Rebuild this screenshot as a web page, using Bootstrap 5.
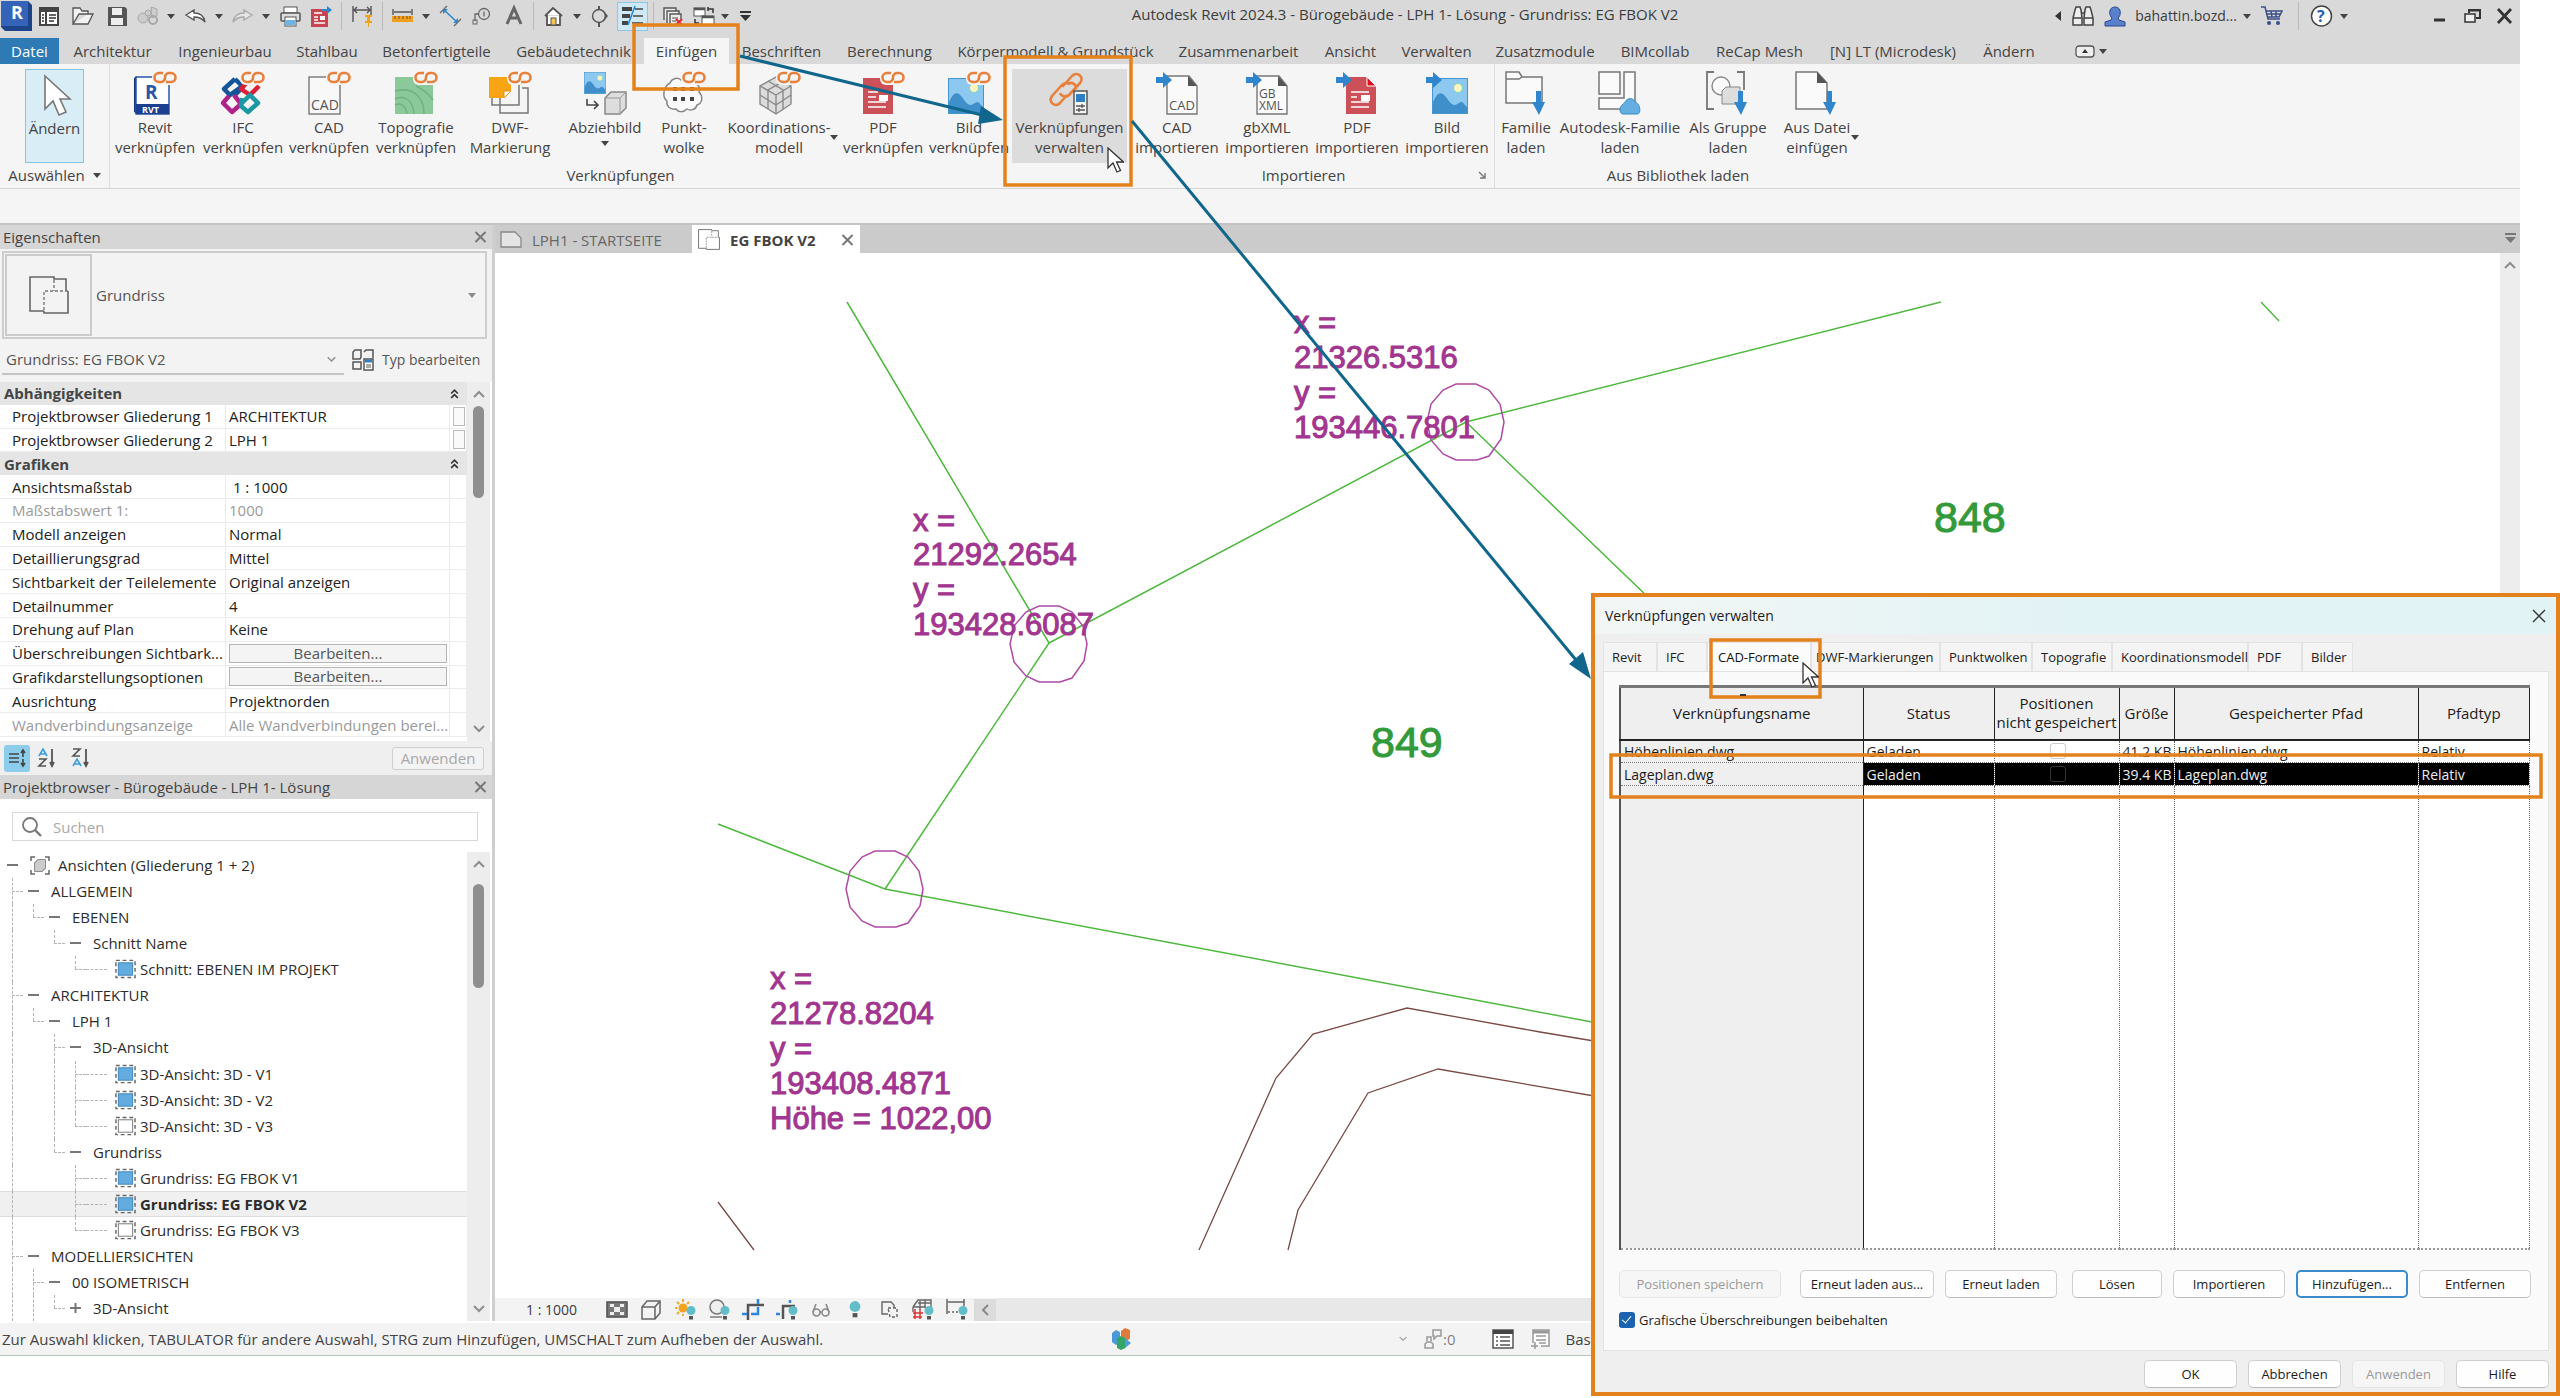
<!DOCTYPE html>
<html lang="de">
<head>
<meta charset="utf-8">
<meta name="viewport" content="width=device-width, initial-scale=1">
<title>Autodesk Revit 2024.3 - Bürogebäude</title>
<link href="https://cdn.jsdelivr.net/npm/bootstrap@5.3.0/dist/css/bootstrap.min.css" rel="stylesheet">
<style>
body{font-family:"Open Sans","Noto Sans",sans-serif;font-size:15px;line-height:20px;color:#3c3c3c;background:#fff;min-height:100vh}
button,input,select{font:inherit;color:inherit}
svg{display:block;overflow:visible}
.plain{border:0;background:none;padding:0;display:flex;align-items:center;justify-content:center;min-width:0}
.app{margin-right:40px}
.title-row{height:38px;background:#d9d9d9}
.qat{display:grid;height:32px;grid-template-columns:33px 31px 38px 30px 32px 14px 34px 14px 33px 14px 34px 29px 11px 30px 10px 31px 16px 32px 31px 33px 6px 34px 14px 31px 35px 7px 32px 30px 12px 29px}
.qat-r{display:grid;height:32px;font-size:14px;grid-template-columns:16px 33px 31px 112px 10px 40px 12px 34px 12px 74px 31px 34px 31px}
.vsep{width:1px;height:28px;background:#bababa;justify-self:center;align-self:center}
.on{background:#cfe8f5;border:1px solid #8cc7e6;width:31px;height:29px;align-self:center;justify-self:center}
.caret-d{width:0;height:0;border:4px solid transparent;border-top:5px solid #444;border-bottom:0}
.rtabs{display:grid;height:26px;background:#d9d9d9;grid-template-columns:59px 107px 118px 86px 133px 141px 85px 105px 111px 221px 145px 79px 93px 124px 96px 113px 154px 78px 86px}
.rtabs .nav-link{padding:0;color:#444;white-space:nowrap;display:flex;align-items:center;justify-content:center;border-radius:0}
.rtabs .nav-link.file{background:#2d7ab4;color:#fff}
.rtabs .nav-link.active{background:#f5f5f5}
.ribbon{height:125px;background:#f5f5f5;border-bottom:1px solid #d4d4d4}
.rgroup{display:flex;flex-direction:column}
.rgrid{display:grid;height:99px;padding-top:5px}
.rgrid>button{flex-direction:column;justify-content:flex-start;height:94px;white-space:nowrap;color:#444;padding-top:2px}
.rgrid svg{width:44px;height:44px;flex:none;margin-bottom:2px}
.rlabel{text-align:center;height:24px;line-height:24px;color:#444}
.g1{width:110px;border-right:1px solid #dedede}
.g2 .rgrid{grid-template-columns:90px 86px 86px 88px 100px 90px 68px 122px 86px 86px 115px}
.g2 .rlabel{padding-left:4px}
.g3{width:368px;border-right:1px solid #dedede}
.g3 .rgrid{grid-template-columns:100px 80px 100px 80px}
.g3 .rlabel{padding-right:14px}
.g4 .rgrid{grid-template-columns:62px 126px 90px 88px}
.sel-mod{width:59px;background:#d9edf6!important;border:1px solid #84c5e5!important;margin-left:25px}
.hov{background:#dcdcdc!important}
.side-caret{position:relative}
.side-caret i{position:absolute;right:2px;top:66px}
.optbar{height:36px;background:#f5f5f5;border-bottom:2px solid #c3c3c3}
.leftp{width:495px;flex:none;background:#f3f3f3;border-right:3px solid #cfcfcf}
.ptitle{height:24px;line-height:22px;background:#d6d6d6;padding:0 5px 0 3px;color:#444}
.typebox{margin:2px 5px 0 2px;height:88px;border:2px solid #cdcdcd;padding:1px;color:#555}
.typebox .thumb{width:87px;height:82px;border:2px solid #cbcbcb}
.typebox .caret-d{border-top-color:#8a8a8a}
.typerow{height:43px;color:#555;padding-bottom:2px}
.typerow select{width:342px;height:31px;border:0;border-bottom:2px solid #c4c4c4;background:transparent;appearance:none;padding:0 4px;margin-left:2px}
.typerow .plain{font-size:14px}
.chev{margin-left:-17px;pointer-events:none}
.pgrid{height:359px;background:#fff;overflow:hidden}
.prows{height:355px}
.prow{flex:1 1 0;min-height:0;display:grid;grid-template-columns:226px 224px 17px;border-bottom:1px solid #ebebeb;color:#222;align-items:stretch}
.prow>*{border-right:1px solid #ebebeb;display:flex;align-items:center;white-space:nowrap;overflow:hidden;padding-left:3px}
.prow>:first-child{padding-left:12px}
.prow.dim{color:#9a9a9a}
.phead{flex:1 1 0;min-height:0;background:#e5e5e5;font-weight:700;color:#444;padding:0 8px 0 4px;display:flex;align-items:center;justify-content:space-between}
.prow .edit{border:1px solid #b4b4b4;background:#f4f4f4;flex:1;padding:0;height:19px;line-height:17px;margin-right:2px;color:#555}
.prow .tiny{border:1px solid #bbb;background:#fafafa;width:12px;height:19px;padding:0}
.sbar{width:23px;background:#ededed;flex:none;display:flex;flex-direction:column;align-items:center;margin-right:2px}
.thumb-v{width:11px;border-radius:6px;background:#8f8f8f}
.pfoot{height:34px;background:#efefef}
.pfoot .ib{width:26px;height:27px;border-radius:3px;margin-left:4px}
.pfoot .picked{background:#8dcdec}
.apply{width:92px;height:23px;border:1px solid #cfcfcf;border-radius:3px;background:#f3f3f3;color:#a8a8a8;padding:0;line-height:20px}
.searchb{margin:13px 14px 11px 12px;height:29px;border:1px solid #d9d9d9;background:#fff}
.searchb input{border:0;outline:0;background:transparent;flex:1}
.searchb input::placeholder{color:#aaa;opacity:1}
.tree{height:469px}
.trow{flex:1 1 0;min-height:0;display:flex;align-items:center;padding-left:2px;white-space:nowrap;color:#2c2c2c;border:1px solid transparent;border-width:1px 0}
.trow.cur{background:#f0f0f0;border-color:#dedede;font-weight:700}
.gd{width:21px;flex:none;align-self:stretch;position:relative;margin:-1px 0}
.gv::before,.gt::before,.ge::before{content:"";position:absolute;left:10px;top:0;bottom:0;border-left:1px dashed #b5b5b5}
.ge::before{bottom:50%}
.gt::after,.ge::after,.gh::after{content:"";position:absolute;left:10px;right:0;top:50%;border-top:1px dashed #b5b5b5}
.gh::after{left:0}
.ex{width:21px;flex:none;height:2px;background:#777;background-clip:content-box;padding:0 5px;margin-right:7px}
.explus{margin-right:7px}
.docs{height:28px;background:#cbcbcb;color:#666}
.docs>div{gap:10px;padding-top:1px}
.docs .tab1{width:197px;padding-left:5px}
.docs .tab2{width:168px;background:#fff;color:#444;font-weight:700;padding-left:6px;padding-right:6px}
.viewbar{height:23px;background:#f3f3f3;font-size:14px}
.viewbar .plain{width:34px;height:22px}
.viewbar .back{width:22px;background:#dcdcdc}
.vscale{width:105px;padding-left:31px}
.vtrack{background:#e8e8e8}
.statusb{height:33px;background:#f3f3f3;border-bottom:1px solid #b9c4b9;color:#444;margin-top:2px}
.hint{width:1110px;padding-left:2px}
.cv{font-family:"Liberation Sans",Arial,sans-serif;min-width:0}
.dlg{position:absolute;right:0;top:593px;width:969px;background:#efefef;border:4px solid #e3821c;color:#1c1c1c;font-size:13px}
.dlg-t{background:linear-gradient(90deg,#f3f6f5,#e2f3f5 50%);border-radius:8px 8px 0 0;font-size:14px;padding:0 10px;height:37px;margin-bottom:8px}
.dtabs{display:grid;padding-left:8px;height:29px;grid-template-columns:54px 50px 104px 129px 92px 80px 136px 54px 51px}
.dtabs .nav-link{padding:0 0 0 8px;border:1px solid #e3e3e3;border-bottom:0;border-radius:0;text-align:left;color:#222;background:#f4f4f4;line-height:27px;white-space:nowrap;margin:0}
.dtabs .nav-link.active{background:#fbfbfb;color:#111;padding-left:10px;line-height:23px}
.dpane{margin:0 7px 0 8px;border:1px solid #e2e2e2;background:#fafafa;padding:13px 14px 20px 15px}
.ltab{width:911px;table-layout:fixed;border-collapse:collapse;font-size:14px;line-height:19px;border:2px solid #555;border-top:3px solid #777;border-right:1px dotted #777;border-bottom:2px dotted #999;margin:0}
.ltab th{height:53px;font-weight:400;font-size:15px;text-align:center;background:#efefef;border-right:1px solid #222;border-bottom:2px solid #222;padding:0;white-space:nowrap;overflow:hidden;vertical-align:middle}
.ltab td{height:23px;padding:0 0 0 3px;border-right:1px dotted #666;border-bottom:1px dotted #777;background:#fff;white-space:nowrap;overflow:hidden}
.ltab td:first-child{background:#efefef;border-right:1px solid #222}
.ltab tr.sel td:not(:first-child){background:#000;color:#eee}
.ltab tr.fill td{height:463px;border-bottom:0}
.cbx{appearance:none;width:16px;height:16px;border:1px solid #ccc;border-radius:3px;display:block;margin:0 auto;background:#fff}
.sel .cbx{background:#000;border-color:#333}
.db{height:28px;border:1px solid #cfcfcf;border-bottom-color:#bbb;border-radius:5px;background:#fefefe;padding:0;line-height:24px;font-size:13px;color:#1c1c1c;white-space:nowrap;width:112px}
.db:disabled{color:#9a9a9a;background:#f6f6f6;border-color:#e4e4e4;opacity:1}
.db.foc{border:2px solid #3a8ccb}
.db.w162{width:162px}.db.w134{width:134px}.db.w90{width:90px}.db.w93{width:93px}
.dbtns{margin-top:20px;gap:11px}
.dopt{margin-top:12px}
.dfoot{gap:11px;padding:9px 7px 4px}
.chk{appearance:none;width:16px;height:16px;background:#1b63b0;border-radius:3px;margin:0;position:relative}
.chk::after{content:"";position:absolute;left:5px;top:2px;width:5px;height:9px;border:solid #fff;border-width:0 1px 1px 0;transform:rotate(40deg)}
.over{position:absolute;left:0;top:0;pointer-events:none}
</style>
<script src="https://cdn.jsdelivr.net/npm/bootstrap@5.3.0/dist/js/bootstrap.bundle.min.js"></script>
</head>
<body class="position-relative">
<svg width="0" height="0" class="position-absolute" aria-hidden="true">
<defs>
<symbol id="lk" viewBox="0 0 44 44" overflow="visible"><rect x="19" y="0" width="26" height="14" rx="6" fill="#f5f5f5"/><path d="M30 2H26a4.500 4.500 0 0 0 0 9h2a4.500 4.500 0 0 0 4-4.500M33 11h5a4.500 4.500 0 0 0 0-9h-2a4.500 4.500 0 0 0-4 4.500" fill="none" stroke="#e8803c" stroke-width="2.600"/></symbol>
<symbol id="ar" viewBox="0 0 44 44"><path d="M1 6h7V1l9 8-9 8v-5H1z" fill="#2f86cc"/></symbol>
<symbol id="dn" viewBox="0 0 44 44"><path d="M32 20h5v11h4l-6 13-7-13h4z" fill="#2f86cc"/></symbol>
<symbol id="pic" viewBox="0 0 36 36"><rect x=".5" y=".5" width="35" height="35" fill="#8cc8ef" stroke="#4596cf"/><circle cx="26" cy="10" r="4.500" fill="#fff3c0" stroke="#7db"/><path d="M1 24c4-9 8-12 13-5 4 6 6 8 9 8s6-6 9-1l3 3v6H1z" fill="#3f8fcb"/></symbol>
<symbol id="bulb" viewBox="0 0 10 14"><circle cx="5" cy="4.500" r="4.500" fill="#63bdc9"/><path d="M3 10h4v3.500H3z" fill="#555"/></symbol>
<symbol id="blue" viewBox="0 0 22 20"><rect x="1" y="1" width="20" height="18" fill="none" stroke="#666" stroke-width="1.500" stroke-dasharray="4 3"/><rect x="3.500" y="3.500" width="15" height="13" fill="#63ace0" stroke="#3b83ba"/></symbol>
<symbol id="wht" viewBox="0 0 22 20"><rect x="1" y="1" width="20" height="18" fill="none" stroke="#666" stroke-width="1.500" stroke-dasharray="4 3"/><rect x="3.500" y="3.500" width="15" height="13" fill="#fff" stroke="#777"/></symbol>
<symbol id="xx" viewBox="0 0 12 12"><path d="M1 1l10 10M11 1L1 11" stroke="#777" stroke-width="2"/></symbol>
<symbol id="up" viewBox="0 0 12 8"><path d="M1 7l5-5 5 5" fill="none" stroke="#8d8d8d" stroke-width="2"/></symbol>
<symbol id="dw" viewBox="0 0 12 8"><path d="M1 1l5 5 5-5" fill="none" stroke="#8d8d8d" stroke-width="2"/></symbol>
<symbol id="dbl" viewBox="0 0 8 10"><path d="M1 5l3-3 3 3M1 9l3-3 3 3" fill="none" stroke="#333" stroke-width="1.500"/></symbol>
<symbol id="plan" viewBox="0 0 40 38"><path d="M15 35H1V1h24v2h12v12M15 35v2h24V15" fill="none" stroke="#666" stroke-width="1.600"/><path d="M25 4v11M15 34V15h24" fill="none" stroke="#777" stroke-width="1.400" stroke-dasharray="3 2"/></symbol>
<symbol id="cur" viewBox="0 0 17 26"><path d="M1 1v20l5-5 4 9 3.500-1.500-4-8.500h7z" fill="#fff" stroke="#333" stroke-width="1.300"/></symbol>
</defs>
</svg>

<div class="app d-flex flex-column">
<header>
<div class="title-row d-flex">
 <div class="qat">
  <button class="plain" aria-label="Revit"><svg width="31" height="30" viewBox="0 0 31 30"><path d="M0 0h27l4 4v26H4l-4-4z" fill="#1d4489"/><path d="M0 0h27v25H0z" fill="#3563b8"/><text x="10" y="18" font-size="18" font-weight="700" fill="#fff">R</text></svg></button>
  <button class="plain" aria-label="Start"><svg width="20" height="19" viewBox="0 0 20 19"><rect x="1" y="1" width="18" height="17" fill="#fff" stroke="#444" stroke-width="2"/><path d="M1 3h18" stroke="#444" stroke-width="4"/><path d="M7 4v14" stroke="#444" stroke-width="2"/><path d="M3 8h2M3 11h2M3 14h2M10 8h7M10 11h7M10 14h5" stroke="#333" stroke-width="1.500"/></svg></button>
  <button class="plain" aria-label="Öffnen"><svg width="22" height="18" viewBox="0 0 22 18"><path d="M1 17V1h7l2 3h6v3M1 17h15l5-10H7z" fill="#f2f2f2" stroke="#555" stroke-width="1.300"/></svg></button>
  <button class="plain" aria-label="Speichern"><svg width="19" height="19" viewBox="0 0 19 19"><path d="M0 0h17l2 2v17H0z" fill="#555"/><rect x="4" y="1" width="10" height="7" fill="#eee"/><rect x="3" y="11" width="12" height="7" fill="#eee"/></svg></button>
  <button class="plain" aria-label="Synchronisieren"><svg width="22" height="20" viewBox="0 0 22 20"><g fill="#ccc" stroke="#a8a8a8"><circle cx="6" cy="12" r="5"/><circle cx="11" cy="7" r="3"/><path d="M14 1l6 2v7l-5 2z"/><circle cx="16" cy="14" r="4" fill="none" stroke-width="2"/></g></svg></button>
  <button class="plain" aria-label="Menü"><i class="caret-d"></i></button>
  <button class="plain" aria-label="Rückgängig"><svg width="21" height="14" viewBox="0 0 21 14"><path d="M1 6l8-5v3c7 0 10 3 11 9-3-4-6-5-11-5v3z" fill="#fff" stroke="#555" stroke-width="1.400"/></svg></button>
  <button class="plain" aria-label="Menü"><i class="caret-d"></i></button>
  <button class="plain" aria-label="Wiederholen"><svg width="21" height="14" viewBox="0 0 21 14"><path d="M20 6l-8-5v3C5 4 2 7 1 13c3-4 6-5 11-5v3z" fill="#e4e4e4" stroke="#a9a9a9" stroke-width="1.400"/></svg></button>
  <button class="plain" aria-label="Menü"><i class="caret-d"></i></button>
  <button class="plain" aria-label="Drucken"><svg width="21" height="21" viewBox="0 0 21 21"><rect x="4" y="1" width="13" height="6" fill="#fff" stroke="#555"/><rect x="1" y="7" width="19" height="8" rx="1" fill="#ddd" stroke="#555" stroke-width="1.500"/><rect x="5" y="11" width="11" height="9" fill="#fff" stroke="#555"/><rect x="6" y="14" width="9" height="5" fill="#6cb4e6"/></svg></button>
  <button class="plain" aria-label="PDF"><svg width="21" height="21" viewBox="0 0 21 21"><path d="M0 3h17v18H0z" fill="#c74550"/><path d="M3 7h8M3 11h4M3 14h4M3 17h11" stroke="#fff" stroke-width="1.500"/><rect x="9" y="10" width="5" height="4" fill="#fff"/><path d="M10 3h6V0l5 4-5 4V5h-6z" fill="#2f86cc"/></svg></button>
  <i class="vsep"></i>
  <button class="plain" aria-label="Bemaßung"><svg width="21" height="21" viewBox="0 0 21 21"><path d="M1 0v16M19 0v9M2 4h16M5 1L2 4l3 3M15 1l3 3-3 3" fill="none" stroke="#555" stroke-width="1.400"/><path d="M13 9h7v2h-2v4h2v2h-3v4h-1v-4h-3v-2h2v-4h-2z" fill="#f3a21b"/></svg></button>
  <i class="vsep"></i>
  <button class="plain" aria-label="Messen"><svg width="21" height="14" viewBox="0 0 21 14"><path d="M1 0v6M20 0v6M2 3h17" stroke="#555" stroke-width="1.400"/><rect x="0" y="7" width="21" height="6" fill="#f0a01c"/><path d="M3 7v3M7 7v3M11 7v3M15 7v3M18 7v3" stroke="#7a5410"/></svg></button>
  <button class="plain" aria-label="Menü"><i class="caret-d"></i></button>
  <button class="plain" aria-label="Ausgerichtet"><svg width="21" height="20" viewBox="0 0 21 20"><path d="M4 4l13 12" stroke="#2f86cc" stroke-width="1.600"/><path d="M0 7l7-7M14 20l7-7" stroke="#666" stroke-width="1.300"/><path d="M3 3v5l5-5zM18 17v-5l-5 5z" fill="#2f86cc"/></svg></button>
  <button class="plain" aria-label="Tag"><svg width="19" height="17" viewBox="0 0 19 17"><circle cx="12" cy="6" r="5.500" fill="none" stroke="#666" stroke-width="1.300"/><path d="M12 3.500v5M7 6H3v7" fill="none" stroke="#666" stroke-width="1.300"/><rect x="1" y="12" width="4" height="4" fill="none" stroke="#666"/></svg></button>
  <button class="plain" aria-label="Text"><svg width="16" height="18" viewBox="0 0 16 18"><path d="M1 17L8 1l7 16M4 11h8" fill="none" stroke="#666" stroke-width="3"/></svg></button>
  <i class="vsep"></i>
  <button class="plain" aria-label="3D"><svg width="19" height="19" viewBox="0 0 19 19"><path d="M1 9l8-8 9 8M3 8v10h13V8" fill="#fff" stroke="#555" stroke-width="1.800"/><rect x="7" y="11" width="5" height="7" fill="#f3c651" stroke="#555"/></svg></button>
  <button class="plain" aria-label="Menü"><i class="caret-d"></i></button>
  <button class="plain" aria-label="Schnitt"><svg width="18" height="21" viewBox="0 0 18 21"><path d="M8 0v3M8 17v4" stroke="#555" stroke-width="2"/><circle cx="8" cy="10" r="6.500" fill="none" stroke="#555" stroke-width="1.400"/><path d="M12 4l5 6-5 6 2-6z" fill="#555"/></svg></button>
  <button class="plain on" aria-label="Dünne Linien"><svg width="21" height="20" viewBox="0 0 21 20"><path d="M0 3h10M0 10h8M0 17h6" stroke="#444" stroke-width="4"/><path d="M13 3h8M11 10h10M10 17h11" stroke="#444" stroke-width="1.400"/><path d="M13 0L6 19" stroke="#2f86cc" stroke-width="1.600"/></svg></button>
  <i class="vsep"></i>
  <button class="plain" aria-label="Fenster schließen"><svg width="20" height="19" viewBox="0 0 20 19"><path d="M1 13V1h12v3M4 16V4h12v3M7 18V7h11v5" fill="#eee" stroke="#555" stroke-width="1.400"/><path d="M9 11h6M9 14h4" stroke="#555"/><path d="M13 12l6 6M19 12l-6 6" stroke="#e02b3a" stroke-width="2.200"/></svg></button>
  <button class="plain" aria-label="Fenster wechseln"><svg width="22" height="19" viewBox="0 0 22 19"><rect x="1" y="1" width="11" height="8" fill="#fff" stroke="#555"/><path d="M1 2h11" stroke="#555" stroke-width="2.500"/><rect x="9" y="9" width="12" height="9" fill="#fff" stroke="#555"/><path d="M9 10h12" stroke="#555" stroke-width="2.500"/><path d="M15 2h5v4M15 0v4M2 12v4h4" fill="none" stroke="#333" stroke-width="1.500"/></svg></button>
  <button class="plain" aria-label="Menü"><i class="caret-d"></i></button>
  <button class="plain" aria-label="Anpassen"><svg width="11" height="10" viewBox="0 0 11 10"><path d="M0 1h11" stroke="#333" stroke-width="2"/><path d="M0 4h11L5.500 10z" fill="#333"/></svg></button>
 </div>
 <div class="flex-grow-1 text-center text-nowrap pt-1">Autodesk Revit 2024.3 - Bürogebäude - LPH 1- Lösung - Grundriss: EG FBOK V2</div>
 <div class="qat-r">
  <button class="plain" aria-label="Einklappen"><svg width="6" height="10"><path d="M6 0v10L0 5z" fill="#333"/></svg></button>
  <button class="plain" aria-label="Suchen"><svg width="22" height="20" viewBox="0 0 22 20"><g fill="#eee" stroke="#444" stroke-width="1.500"><path d="M3 4l1-3h4l1 3 1 8v7H1v-7zM19 4l-1-3h-4l-1 3-1 8v7h9v-7z"/></g><path d="M1 12h9M12 12h9M9 7h4" stroke="#444" stroke-width="1.500"/></svg></button>
  <button class="plain" aria-label="Konto"><svg width="22" height="21" viewBox="0 0 22 21"><path d="M11 1c7 0 6 9 3 11l1 2 6 2v4H1v-4l6-2 1-2C5 10 4 1 11 1z" fill="#5a7fcb" stroke="#2a4a90"/></svg></button>
  <button class="plain text-nowrap">bahattin.bozd...</button>
  <button class="plain" aria-label="Menü"><i class="caret-d"></i></button>
  <button class="plain" aria-label="Shop"><svg width="22" height="20" viewBox="0 0 22 20"><path d="M0 1h4l3 12h12M5 5h16l-3 6H7M5 8h14M10 5l1 6M15 5v6" fill="none" stroke="#3a4f86" stroke-width="1.500"/><circle cx="8" cy="17" r="2" fill="#3a4f86"/><circle cx="17" cy="17" r="2" fill="#3a4f86"/></svg></button>
  <i class="vsep"></i>
  <button class="plain" aria-label="Hilfe"><svg width="23" height="22" viewBox="0 0 23 22"><circle cx="11.500" cy="11" r="10" fill="#fff" stroke="#444" stroke-width="1.500"/><text x="7" y="17" font-size="16" font-weight="700" fill="#2a5db5">?</text></svg></button>
  <button class="plain" aria-label="Menü"><i class="caret-d"></i></button>
  <i></i>
  <button class="plain" aria-label="Minimieren"><svg width="11" height="12"><path d="M0 10h11" stroke="#333" stroke-width="3"/></svg></button>
  <button class="plain" aria-label="Wiederherstellen"><svg width="17" height="14" viewBox="0 0 17 14"><path d="M5 4V1h11v8h-4M5 1.500h11" fill="none" stroke="#333" stroke-width="2"/><rect x="1" y="5" width="10" height="8" fill="#eee" stroke="#333" stroke-width="1.500"/></svg></button>
  <button class="plain" aria-label="Schließen"><svg width="15" height="14" viewBox="0 0 15 14"><path d="M1 0l13 14M14 0L1 14" stroke="#333" stroke-width="2.800"/></svg></button>
 </div>
</div>
<nav class="rtabs nav">
 <a class="nav-link file" href="#">Datei</a><a class="nav-link" href="#">Architektur</a><a class="nav-link" href="#">Ingenieurbau</a><a class="nav-link" href="#">Stahlbau</a><a class="nav-link" href="#">Betonfertigteile</a><a class="nav-link" href="#">Gebäudetechnik</a><a class="nav-link active" href="#">Einfügen</a><a class="nav-link" href="#">Beschriften</a><a class="nav-link" href="#">Berechnung</a><a class="nav-link" href="#">Körpermodell &amp; Grundstück</a><a class="nav-link" href="#">Zusammenarbeit</a><a class="nav-link" href="#">Ansicht</a><a class="nav-link" href="#">Verwalten</a><a class="nav-link" href="#">Zusatzmodule</a><a class="nav-link" href="#">BIMcollab</a><a class="nav-link" href="#">ReCap Mesh</a><a class="nav-link" href="#">[N] LT (Microdesk)</a><a class="nav-link" href="#">Ändern</a>
 <button class="plain gap-1" aria-label="Menüband"><svg width="20" height="13" viewBox="0 0 20 13"><rect x="1" y="1" width="18" height="11" rx="3" fill="#eee" stroke="#555" stroke-width="1.300"/><path d="M7 8h6l-3-4z" fill="#333"/></svg><i class="caret-d"></i></button>
</nav>
<div class="ribbon d-flex">
 <div class="rgroup g1"><div class="rgrid"><button class="plain sel-mod"><svg viewBox="0 0 44 44"><path d="M12 4v33l8-8 6 14 7-3-6-13h10z" fill="#fff" stroke="#777" stroke-width="1.600"/></svg>Ändern</button></div>
  <div class="rlabel d-flex align-items-center justify-content-center gap-2">Auswählen <i class="caret-d"></i></div></div>
 <div class="rgroup g2"><div class="rgrid">
  <button class="plain"><svg viewBox="0 0 44 44"><path d="M1 7l3-2v38l-3-2z" fill="#17357a"/><rect x="3" y="6" width="33" height="37" fill="#fff" stroke="#2a55a8" stroke-width="1.500"/><path d="M3 33h33v10H3z" fill="#1c3f8f"/><text x="12" y="28" font-size="19" font-weight="700" fill="#2a55a8">R</text><text x="9" y="42" font-size="9" font-weight="700" fill="#fff">RVT</text><use href="#lk"/></svg>Revit<br>verknüpfen</button>
  <button class="plain"><svg viewBox="0 0 44 44"><g fill="none" stroke-width="4.500" stroke-linejoin="round"><path d="M14 8L3 18l6 6 11-8" stroke="#12559b"/><path d="M14 8l8 8-9 9" stroke="#12559b"/><path d="M27 10l-7 8 9 6 9-9" stroke="#dd1f35"/><path d="M8 25l-6 7 9 9 9-8-7-9" stroke="#b0218a"/><path d="M21 27l-1 8 7 6 10-9-8-8-9 9" stroke="#1c98a3"/></g><use href="#lk"/></svg>IFC<br>verknüpfen</button>
  <button class="plain"><svg viewBox="0 0 44 44"><rect x="2" y="6" width="31" height="37" fill="#f8f8f8" stroke="#777" stroke-width="1.400"/><text x="4" y="39" font-size="14" fill="#555">CAD</text><use href="#lk"/></svg>CAD<br>verknüpfen</button>
  <button class="plain"><svg viewBox="0 0 44 44"><rect x="1" y="6" width="38" height="37" fill="#8bc99b"/><path d="M1 28c10-5 18 2 19 15M1 34c7-3 11 2 12 9M1 20c20-5 29 8 29 23M22 15c8 4 13 8 17 14" fill="none" stroke="#6fb483" stroke-width="1.600"/><use href="#lk"/></svg>Topografie<br>verknüpfen</button>
  <button class="plain"><svg viewBox="0 0 44 44"><path d="M12 27v15h28V17h-6" fill="none" stroke="#777" stroke-width="1.500"/><path d="M4 27v7h27V12" fill="none" stroke="#777" stroke-width="1.500"/><path d="M1 6h22v13l-8 8H1z" fill="#f7a512"/><path d="M16 27v-7h7z" fill="#fff" stroke="#e08f10"/><use href="#lk"/></svg>DWF-<br>Markierung</button>
  <button class="plain"><svg viewBox="0 0 44 44"><use href="#pic" x="1" y="1" width="22" height="22"/><path d="M4 28v6h11M11 30l4 4-4 4" fill="none" stroke="#444" stroke-width="1.600"/><path d="M22 27l6-6h15v16l-6 6H22z" fill="#ddd" stroke="#888" stroke-width="1.500"/><path d="M22 27h15v16M37 27l6-6" fill="none" stroke="#999"/></svg>Abziehbild<i class="caret-d mt-1"></i></button>
  <button class="plain"><svg viewBox="0 0 44 44"><path d="M8 12c2-5 8-6 11-3 4-3 9-1 10 3 6-1 10 4 8 9 4 4 4 11-2 13-1 5-7 6-10 4-4 4-9 3-11 0-6 1-10-3-9-8-5-4-4-14 3-18z" fill="#fafafa" stroke="#888" stroke-width="1.500"/><path d="M11 18h4M19 18h4M28 18h4M11 28h4M19 28h4M28 28h4" stroke="#444" stroke-width="4"/><use href="#lk"/></svg>Punkt-<br>wolke</button>
  <button class="plain side-caret"><svg viewBox="0 0 44 44"><path d="M19 6L3 15v18l16 10 15-10V15z" fill="#dcdcdc" stroke="#888" stroke-width="1.400"/><path d="M3 15l16 9 15-9M19 24v19M11 10l15 9v19M27 10l-16 9v19M3 24l16 10 15-10" fill="none" stroke="#888" stroke-width="1.400"/><use href="#lk"/></svg>Koordinations-<br>modell<i class="caret-d"></i></button>
  <button class="plain"><svg viewBox="0 0 44 44"><rect x="2" y="7" width="30" height="36" fill="#cb5058"/><path d="M7 21h10M7 26h8M7 31h18M7 36h18" stroke="#fff" stroke-width="1.600"/><rect x="18" y="24" width="9" height="6" fill="#fff"/><use href="#lk"/></svg>PDF<br>verknüpfen</button>
  <button class="plain"><svg viewBox="0 0 44 44"><use href="#pic" x="1" y="7" width="36" height="36"/><use href="#lk"/></svg>Bild<br>verknüpfen</button>
  <button class="plain hov"><svg viewBox="0 0 44 44"><g fill="none" stroke="#e8803c" stroke-width="2.600" stroke-linejoin="round"><path d="M14 16l10-11c5-5 13 1 8 7L21 24c-3 3-8 1-9-2M20 13c4-3 9 1 8 5"/><path d="M22 13c-4-2-7 0-9 2L4 25c-4 6 3 12 8 7l7-8"/></g><rect x="26" y="20" width="13" height="23" fill="#f4f4f4" stroke="#555" stroke-width="1.500"/><rect x="28" y="23" width="9" height="8" fill="#2f7fc4"/><path d="M28 35h9M28 39h9M34 33v4M31 37v4" stroke="#555" stroke-width="1.300"/></svg>Verknüpfungen<br>verwalten</button>
 </div><div class="rlabel">Verknüpfungen</div></div>
 <div class="rgroup g3"><div class="rgrid">
  <button class="plain"><svg viewBox="0 0 44 44"><path d="M12 5h22l8 10v28H12z" fill="#fafafa" stroke="#777" stroke-width="1.400"/><path d="M33 5l9 10h-9z" fill="#555"/><text x="14" y="39" font-size="13" fill="#555">CAD</text><use href="#ar"/></svg>CAD<br>importieren</button>
  <button class="plain"><svg viewBox="0 0 44 44"><path d="M12 5h22l8 10v28H12z" fill="#fafafa" stroke="#777" stroke-width="1.400"/><path d="M33 5l9 10h-9z" fill="#555"/><text x="14" y="27" font-size="12" fill="#555">GB</text><text x="14" y="39" font-size="12" fill="#555">XML</text><use href="#ar"/></svg>gbXML<br>importieren</button>
  <button class="plain"><svg viewBox="0 0 44 44"><path d="M11 6h21l9 9v28H11z" fill="#cb5058"/><path d="M32 6l9 9h-9z" fill="#e0101c" stroke="#fff"/><path d="M16 21h18M16 26h6M16 31h18M16 36h18" stroke="#fff" stroke-width="1.600"/><rect x="26" y="24" width="9" height="6" fill="#fff"/><use href="#ar"/></svg>PDF<br>importieren</button>
  <button class="plain"><svg viewBox="0 0 44 44"><use href="#pic" x="7" y="7" width="36" height="36"/><use href="#ar"/></svg>Bild<br>importieren</button>
 </div><div class="rlabel position-relative">Importieren<svg class="position-absolute end-0 top-0 mt-2 me-2" width="8" height="8"><path d="M1 1l6 6M7 2v5H2" fill="none" stroke="#777" stroke-width="1.400"/></svg></div></div>
 <div class="rgroup g4"><div class="rgrid">
  <button class="plain"><svg viewBox="0 0 44 44"><path d="M2 7V1h13l3 5h20v26H2zM2 8h13l3-2" fill="#fafafa" stroke="#777" stroke-width="1.500"/><use href="#dn"/></svg>Familie<br>laden</button>
  <button class="plain"><svg viewBox="0 0 44 44"><path d="M1 1h21v22H1zM26 1h11v37H1V27h25z" fill="#fafafa" stroke="#777" stroke-width="1.500"/><path d="M22 39c0-5 4-6 5-8 2-4 8-5 10 0 5 1 7 12 2 12H25c-2 0-3-2-3-4z" fill="#65aee2" stroke="#3b8cc8"/></svg>Autodesk-Familie<br>laden</button>
  <button class="plain"><svg viewBox="0 0 44 44"><path d="M8 1H1v37h7M31 1h7v18" fill="none" stroke="#777" stroke-width="1.800"/><circle cx="15" cy="15" r="9" fill="#fafafa" stroke="#888" stroke-width="1.400"/><path d="M16 20l4-4h14v13l-4 4H16z" fill="#ddd" stroke="#888"/><use href="#dn"/></svg>Als Gruppe<br>laden</button>
  <button class="plain side-caret"><svg viewBox="0 0 44 44"><path d="M1 1h21l10 11v26H1z" fill="#fafafa" stroke="#777" stroke-width="1.500"/><path d="M22 1l10 11H22z" fill="#555"/><use href="#dn"/></svg>Aus Datei<br>einfügen<i class="caret-d"></i></button>
 </div><div class="rlabel">Aus Bibliothek laden</div></div>
</div>
<div class="optbar"></div>
</header>

<div class="d-flex">
<aside class="leftp d-flex flex-column">
 <div class="ptitle d-flex justify-content-between align-items-center"><span>Eigenschaften</span><button class="plain" aria-label="Schließen"><svg width="13" height="12"><use href="#xx"/></svg></button></div>
 <div class="typebox d-flex align-items-center gap-1"><div class="thumb d-flex align-items-center justify-content-center"><svg width="40" height="38"><use href="#plan"/></svg></div><span class="flex-grow-1">Grundriss</span><i class="caret-d me-2"></i></div>
 <div class="typerow d-flex align-items-center"><select aria-label="Element"><option>Grundriss: EG FBOK V2</option></select><svg width="9" height="7" viewBox="0 0 12 8" class="chev"><use href="#dw"/></svg>
  <button class="plain gap-2 ms-3 text-nowrap"><svg width="22" height="22" viewBox="0 0 22 22"><g fill="none" stroke="#555" stroke-width="1.500"><path d="M1 3l2-2h6v7l-1 2H1zM12 3l2-2h7v8M1 13h8v7H1z"/><rect x="12" y="10" width="9" height="11" fill="#fff"/></g><path d="M13 12h7" stroke="#2f7fc4" stroke-width="3"/><path d="M14 16h5M14 18h5" stroke="#555"/></svg>Typ bearbeiten</button></div>
 <div class="d-flex pgrid"><div class="flex-grow-1 d-flex flex-column prows">
  <div class="phead">Abhängigkeiten<svg width="9" height="11"><use href="#dbl"/></svg></div>
  <div class="prow"><span>Projektbrowser Gliederung 1</span><span>ARCHITEKTUR</span><span><button class="tiny" aria-label="Zuordnen"></button></span></div>
  <div class="prow"><span>Projektbrowser Gliederung 2</span><span>LPH 1</span><span><button class="tiny" aria-label="Zuordnen"></button></span></div>
  <div class="phead">Grafiken<svg width="9" height="11"><use href="#dbl"/></svg></div>
  <div class="prow"><span>Ansichtsmaßstab</span><span>&nbsp;1 : 1000</span><span></span></div>
  <div class="prow dim"><span>Maßstabswert 1:</span><span>1000</span><span></span></div>
  <div class="prow"><span>Modell anzeigen</span><span>Normal</span><span></span></div>
  <div class="prow"><span>Detaillierungsgrad</span><span>Mittel</span><span></span></div>
  <div class="prow"><span>Sichtbarkeit der Teilelemente</span><span>Original anzeigen</span><span></span></div>
  <div class="prow"><span>Detailnummer</span><span>4</span><span></span></div>
  <div class="prow"><span>Drehung auf Plan</span><span>Keine</span><span></span></div>
  <div class="prow"><span>Überschreibungen Sichtbark...</span><span><button class="edit">Bearbeiten...</button></span><span></span></div>
  <div class="prow"><span>Grafikdarstellungsoptionen</span><span><button class="edit">Bearbeiten...</button></span><span></span></div>
  <div class="prow"><span>Ausrichtung</span><span>Projektnorden</span><span></span></div>
  <div class="prow dim"><span>Wandverbindungsanzeige</span><span>Alle Wandverbindungen berei...</span><span></span></div>
 </div><div class="sbar pt-2"><svg width="12" height="8"><use href="#up"/></svg><div class="thumb-v mt-2" style="height:92px"></div><svg width="12" height="8" class="mt-auto mb-2"><use href="#dw"/></svg></div></div>
 <div class="pfoot d-flex align-items-center"><button class="plain ib picked" aria-label="Gruppiert"><svg width="18" height="18" viewBox="0 0 18 18"><path d="M1 5h10M1 9h10M1 13h10M15 2v6M15 10v7M13 4l2-3 2 3M13 14l2 3 2-3" fill="none" stroke="#444" stroke-width="1.600"/></svg></button><button class="plain ib" aria-label="A-Z"><svg width="18" height="20" viewBox="0 0 18 20"><path d="M1 8l4-7 4 7M2 6h6" fill="none" stroke="#3b9ce0" stroke-width="1.600"/><path d="M1 11h7l-7 7h7" fill="none" stroke="#555" stroke-width="1.600"/><path d="M14 1v16M12 14l2 4 2-4" fill="none" stroke="#555" stroke-width="1.800"/></svg></button><button class="plain ib ms-2" aria-label="Z-A"><svg width="18" height="20" viewBox="0 0 18 20"><path d="M1 18l4-7 4 7M2 16h6" fill="none" stroke="#3b9ce0" stroke-width="1.600"/><path d="M1 1h7l-7 7h7" fill="none" stroke="#555" stroke-width="1.600"/><path d="M14 1v16M12 14l2 4 2-4" fill="none" stroke="#555" stroke-width="1.800"/></svg></button><button class="apply ms-auto me-2" disabled>Anwenden</button></div>
 <div class="ptitle d-flex justify-content-between align-items-center"><span>Projektbrowser - Bürogebäude - LPH 1- Lösung</span><button class="plain" aria-label="Schließen"><svg width="13" height="12"><use href="#xx"/></svg></button></div>
 <div class="bg-white flex-grow-1 d-flex flex-column">
 <div class="searchb d-flex align-items-center flex-grow-0"><svg width="22" height="22" viewBox="0 0 22 22" class="mx-2"><circle cx="9" cy="9" r="7" fill="none" stroke="#777" stroke-width="1.800"/><path d="M14 14l6 6" stroke="#777" stroke-width="2.400"/></svg><input type="search" placeholder="Suchen" aria-label="Suchen"></div>
 <div class="d-flex"><div class="tree flex-grow-1 d-flex flex-column">
  <div class="trow"><i class="ex"></i><svg width="20" height="19" viewBox="0 0 20 19" class="me-2"><path d="M5 1H1v4M15 1h4v4M5 18H1v-4M15 18h4v-4M5 7l3-3h7v8l-3 3H5z" fill="none" stroke="#666" stroke-width="1.500"/><path d="M5 7l3-3h7v8l-3 3H5z" fill="#ccc"/></svg>Ansichten (Gliederung 1 + 2)</div>
  <div class="trow"><i class="gd gt"></i><i class="ex"></i>ALLGEMEIN</div>
  <div class="trow"><i class="gd gv"></i><i class="gd ge"></i><i class="ex"></i>EBENEN</div>
  <div class="trow"><i class="gd gv"></i><i class="gd"></i><i class="gd ge"></i><i class="ex"></i>Schnitt Name</div>
  <div class="trow"><i class="gd gv"></i><i class="gd"></i><i class="gd"></i><i class="gd ge"></i><i class="gd gh me-2"></i><svg width="21" height="20" class="me-1"><use href="#blue"/></svg>Schnitt: EBENEN IM PROJEKT</div>
  <div class="trow"><i class="gd gt"></i><i class="ex"></i>ARCHITEKTUR</div>
  <div class="trow"><i class="gd gv"></i><i class="gd ge"></i><i class="ex"></i>LPH 1</div>
  <div class="trow"><i class="gd gv"></i><i class="gd"></i><i class="gd gt"></i><i class="ex"></i>3D-Ansicht</div>
  <div class="trow"><i class="gd gv"></i><i class="gd"></i><i class="gd gv"></i><i class="gd gt"></i><i class="gd gh me-2"></i><svg width="21" height="20" class="me-1"><use href="#blue"/></svg>3D-Ansicht: 3D - V1</div>
  <div class="trow"><i class="gd gv"></i><i class="gd"></i><i class="gd gv"></i><i class="gd gt"></i><i class="gd gh me-2"></i><svg width="21" height="20" class="me-1"><use href="#blue"/></svg>3D-Ansicht: 3D - V2</div>
  <div class="trow"><i class="gd gv"></i><i class="gd"></i><i class="gd gv"></i><i class="gd ge"></i><i class="gd gh me-2"></i><svg width="21" height="20" class="me-1"><use href="#wht"/></svg>3D-Ansicht: 3D - V3</div>
  <div class="trow"><i class="gd gv"></i><i class="gd"></i><i class="gd ge"></i><i class="ex"></i>Grundriss</div>
  <div class="trow"><i class="gd gv"></i><i class="gd"></i><i class="gd"></i><i class="gd gt"></i><i class="gd gh me-2"></i><svg width="21" height="20" class="me-1"><use href="#blue"/></svg>Grundriss: EG FBOK V1</div>
  <div class="trow cur"><i class="gd gv"></i><i class="gd"></i><i class="gd"></i><i class="gd gt"></i><i class="gd gh me-2"></i><svg width="21" height="20" class="me-1"><use href="#blue"/></svg>Grundriss: EG FBOK V2</div>
  <div class="trow"><i class="gd gv"></i><i class="gd"></i><i class="gd"></i><i class="gd ge"></i><i class="gd gh me-2"></i><svg width="21" height="20" class="me-1"><use href="#wht"/></svg>Grundriss: EG FBOK V3</div>
  <div class="trow"><i class="gd gt"></i><i class="ex"></i>MODELLIERSICHTEN</div>
  <div class="trow"><i class="gd gv"></i><i class="gd gt"></i><i class="ex"></i>00 ISOMETRISCH</div>
  <div class="trow"><i class="gd gv"></i><i class="gd gv"></i><i class="gd ge"></i><svg width="21" height="12" viewBox="0 0 21 12" class="explus"><path d="M5 6h11M10.500 1v10" stroke="#777" stroke-width="2"/></svg>3D-Ansicht</div>
 </div><div class="sbar pt-2"><svg width="12" height="8"><use href="#up"/></svg><div class="thumb-v mt-3" style="height:104px"></div><svg width="12" height="8" class="mt-auto mb-2"><use href="#dw"/></svg></div></div>
 </div>
</aside>

<main class="flex-grow-1 d-flex flex-column">
 <div class="docs d-flex">
  <div class="tab1 d-flex align-items-center"><svg width="22" height="17" viewBox="0 0 22 17"><path d="M1 1h14l6 6v9H1z" fill="#e4e4e4" stroke="#888" stroke-width="1.300"/></svg>LPH1 - STARTSEITE</div>
  <div class="tab2 d-flex align-items-center"><svg width="22" height="21"><use href="#plan"/></svg>EG FBOK V2<button class="plain ms-auto" aria-label="Schließen"><svg width="13" height="12"><use href="#xx"/></svg></button></div>
  <svg width="11" height="10" viewBox="0 0 11 10" class="ms-auto me-1 mt-2"><path d="M0 1h11" stroke="#777" stroke-width="2"/><path d="M0 4h11L5.500 10z" fill="#777"/></svg>
 </div>
 <div class="d-flex flex-grow-1"><svg class="cv flex-grow-1" viewBox="495 254 2005 1045" preserveAspectRatio="xMinYMin meet">
  <g fill="none" stroke="#4fb93f" stroke-width="1.500"><path d="M847 303L1049 644M1049 644L1466 423L1941 303M1466 423L1650 600M1049 644L885 890M718 825L885 890L1592 1023M2261 303L2279 322"/></g>
  <g fill="none" stroke="#7a4a45" stroke-width="1.300"><path d="M1199 1251L1276 1079L1313 1035L1407 1009L1540 1033L1600 1043M1288 1251L1298 1211L1368 1094L1438 1070L1600 1098M718 1203L754 1251"/></g>
  <g fill="none" stroke="#b04aa5" stroke-width="1.500"><path id="node" d="M1087 645l-3 17-12 17-12 4h-21l-13-6-12-14-4-18 4-18 12-14 13-6h20l13 6 11 14z"/><use href="#node" x="417" y="-222"/><use href="#node" x="-164" y="245"/></g>
  <g fill="#a8358f" stroke="#9c358f" stroke-width="1" font-size="31">
   <text x="1294" y="334">x =</text><text x="1294" y="369">21326.5316</text><text x="1294" y="404">y =</text><text x="1294" y="439">193446.7801</text>
   <text x="913" y="532">x =</text><text x="913" y="566">21292.2654</text><text x="913" y="601">y =</text><text x="913" y="636">193428.6087</text>
   <text x="770" y="990">x =</text><text x="770" y="1025">21278.8204</text><text x="770" y="1060">y =</text><text x="770" y="1095">193408.4871</text><text x="770" y="1130">Höhe = 1022,00</text>
  </g>
  <g fill="#329a3a" stroke="#329a3a" stroke-width="1" font-size="43"><text x="1371" y="758">849</text><text x="1934" y="533">848</text></g>
 </svg><div class="sbar me-0 pt-2" style="width:20px"><svg width="12" height="8"><use href="#up"/></svg></div></div>
 <div class="viewbar d-flex align-items-center"><span class="text-nowrap vscale">1 : 1000</span>
  <button class="plain" aria-label="Detail"><svg width="22" height="17" viewBox="0 0 22 17"><rect x="1" y="1" width="20" height="15" fill="#777" stroke="#555" stroke-width="1.600"/><path d="M4 3h4v3H4zM14 3h4v3h-4zM4 11h4v3H4zM14 11h4v3h-4zM8 6h6v5H8z" fill="#eee"/></svg></button>
  <button class="plain" aria-label="Stil"><svg width="20" height="20" viewBox="0 0 20 20"><path d="M1 7l5-6h13v12l-5 6H1zM1 7h13v12M14 7l5-6" fill="none" stroke="#666" stroke-width="1.500"/></svg></button>
  <button class="plain" aria-label="Sonne"><svg width="22" height="21" viewBox="0 0 22 21"><circle cx="9" cy="9" r="4.500" fill="#f4a31c"/><path d="M9 0v3M1 9h2M3 3l2 2M15 3l-2 2M3 15l2-2M9 15v2" stroke="#f4a31c" stroke-width="1.800"/><use href="#bulb" x="12" y="7" width="10" height="14"/></svg></button>
  <button class="plain" aria-label="Schatten"><svg width="22" height="21" viewBox="0 0 22 21"><circle cx="9" cy="8" r="7" fill="#eee" stroke="#777" stroke-width="1.500"/><path d="M2 18h12" stroke="#999" stroke-width="2"/><use href="#bulb" x="12" y="7" width="10" height="14"/></svg></button>
  <button class="plain" aria-label="Zuschneiden"><svg width="22" height="21" viewBox="0 0 22 21"><path d="M6 21V6h16" fill="none" stroke="#555" stroke-width="2.500"/><path d="M16 0v5M0 15h5M9 15h7V8" fill="none" stroke="#2f86dd" stroke-width="2.500"/></svg></button>
  <button class="plain" aria-label="Zuschneidebereich"><svg width="22" height="21" viewBox="0 0 22 21"><path d="M7 20V7h12" fill="none" stroke="#555" stroke-width="2.500"/><path d="M14 1v3M0 15h4" stroke="#2f86dd" stroke-width="2.500"/><use href="#bulb" x="12" y="7" width="10" height="14"/></svg></button>
  <button class="plain" aria-label="Ausblenden"><svg width="18" height="14" viewBox="0 0 18 14"><g fill="none" stroke="#888" stroke-width="1.600"><circle cx="4.500" cy="9.500" r="3.500"/><circle cx="13.500" cy="9.500" r="3.500"/><path d="M1 9l3-8M17 9l-3-8M8 9h2"/></g></svg></button>
  <button class="plain" aria-label="Anzeigen"><svg width="12" height="17"><use href="#bulb"/></svg></button>
  <button class="plain" aria-label="Temporär"><svg width="17" height="17" viewBox="0 0 17 17"><path d="M7 13H1V1h9l3 3v3" fill="none" stroke="#666" stroke-width="1.400"/><path d="M7 7h9v9H9z" fill="none" stroke="#666" stroke-width="1.400" stroke-dasharray="3 2"/></svg></button>
  <button class="plain" aria-label="Analyse"><svg width="22" height="21" viewBox="0 0 22 21"><path d="M1 8l5-7h13v8M1 8h13M1 8v5M6 4h13M8 2v8M13 1v8" fill="none" stroke="#666" stroke-width="1.400"/><path d="M1 14h10M3 10v10M8 10v10M1 18h9" stroke="#d33" stroke-width="1.500"/><use href="#bulb" x="12" y="7" width="10" height="14"/></svg></button>
  <button class="plain" aria-label="Abhängigkeiten"><svg width="22" height="21" viewBox="0 0 22 21"><path d="M1 0v15M18 0v7M2 3h16" stroke="#666" stroke-width="1.500"/><path d="M2 13h10" stroke="#666" stroke-width="1.500" stroke-dasharray="2 2"/><use href="#bulb" x="12" y="7" width="10" height="14"/></svg></button>
  <button class="plain back" aria-label="Zurück"><svg width="7" height="12"><path d="M6 1L1 6l5 5" fill="none" stroke="#888" stroke-width="2"/></svg></button>
  <div class="flex-grow-1 align-self-stretch vtrack"></div>
 </div>
</main>
</div>
<footer class="statusb d-flex align-items-center text-nowrap"><span class="hint">Zur Auswahl klicken, TABULATOR für andere Auswahl, STRG zum Hinzufügen, UMSCHALT zum Aufheben der Auswahl.</span>
 <svg width="22" height="22" viewBox="0 0 22 22"><path d="M2 5l4-3 4 2v11l-4 2-4-3z" fill="#4a9ad9"/><path d="M11 3l4-3 5 2v9l-5 2-4-2z" fill="#e07a3c"/><path d="M14 9l7 6-7 6z" fill="#4f9be0"/><path d="M7 10l4-2 4 2v10l-4 2-4-2z" fill="#35a565"/></svg>
 <span style="width:267px"></span><svg width="8" height="6" viewBox="0 0 12 8" opacity=".7"><use href="#dw"/></svg>
 <svg width="20" height="20" viewBox="0 0 20 20" class="ms-3"><path d="M2 19v-4l2-2h4l2 2v4zM4 12V8h4v4M10 1h8v6h-4l-3 3V7h-1z" fill="none" stroke="#999" stroke-width="1.500"/></svg><span class="text-black-50">:0</span>
 <svg width="22" height="20" viewBox="0 0 22 20" style="margin-left:36px"><rect x="1" y="1" width="20" height="18" fill="#fff" stroke="#555" stroke-width="1.500"/><path d="M1 3h20" stroke="#444" stroke-width="4"/><path d="M4 8h2M8 8h10M4 12h2M8 12h10M4 16h2M8 16h10" stroke="#555" stroke-width="1.500"/></svg>
 <svg width="20" height="20" viewBox="0 0 20 20" class="ms-3"><path d="M3 14V1h16v16h-8" fill="#fff" stroke="#999" stroke-width="1.500"/><path d="M3 3h16" stroke="#999" stroke-width="3"/><path d="M6 7h10M6 11h10M9 14h7M1 17h7M5 13v7" stroke="#999" stroke-width="1.500"/></svg>
 <span class="ms-3">Basismodell</span>
</footer>
</div>

<section class="dlg" role="dialog" aria-label="Verknüpfungen verwalten">
 <div class="dlg-t d-flex align-items-center justify-content-between"><span>Verknüpfungen verwalten</span><button class="plain" aria-label="Schließen"><svg width="14" height="14" viewBox="0 0 14 14"><path d="M1 1l12 12M13 1L1 13" stroke="#333" stroke-width="1.400"/></svg></button></div>
 <div class="dtabs nav" role="tablist"><button class="nav-link">Revit</button><button class="nav-link">IFC</button><button class="nav-link active">CAD-Formate</button><button class="nav-link ps-1">DWF-Markierungen</button><button class="nav-link">Punktwolken</button><button class="nav-link">Topografie</button><button class="nav-link">Koordinationsmodell</button><button class="nav-link">PDF</button><button class="nav-link">Bilder</button></div>
 <div class="dpane">
  <table class="ltab"><colgroup><col style="width:243px"><col style="width:131px"><col style="width:125px"><col style="width:55px"><col style="width:244px"><col></colgroup>
  <thead><tr><th>Verknüpfungsname</th><th>Status</th><th>Positionen<br>nicht gespeichert</th><th>Größe</th><th>Gespeicherter Pfad</th><th>Pfadtyp</th></tr></thead>
  <tbody><tr><td>Höhenlinien.dwg</td><td>Geladen</td><td><input type="checkbox" class="cbx" disabled aria-label="Positionen nicht gespeichert"></td><td>41.2 KB</td><td>Höhenlinien.dwg</td><td>Relativ</td></tr>
  <tr class="sel"><td>Lageplan.dwg</td><td>Geladen</td><td><input type="checkbox" class="cbx" disabled aria-label="Positionen nicht gespeichert"></td><td>39.4 KB</td><td>Lageplan.dwg</td><td>Relativ</td></tr>
  <tr class="fill"><td></td><td></td><td></td><td></td><td></td><td></td></tr></tbody></table>
  <div class="d-flex dbtns"><button class="db w162 me-2" disabled>Positionen speichern</button><button class="db w134">Erneut laden aus...</button><button class="db">Erneut laden</button><button class="db w90 ms-1">Lösen</button><button class="db">Importieren</button><button class="db foc">Hinzufügen...</button><button class="db">Entfernen</button></div>
  <div class="d-flex align-items-center gap-1 dopt"><input type="checkbox" class="chk" id="keep" checked><label for="keep">Grafische Überschreibungen beibehalten</label></div>
 </div>
 <div class="d-flex justify-content-end dfoot"><button class="db w93">OK</button><button class="db w93">Abbrechen</button><button class="db w93" disabled>Anwenden</button><button class="db w93">Hilfe</button></div>
</section>

<svg class="over" width="2560" height="1398" aria-hidden="true">
 <g fill="none" stroke="#e3821c" stroke-width="3.500"><rect x="634" y="25" width="104" height="64"/><rect x="1005" y="57" width="126" height="128"/><rect x="1711" y="640" width="109" height="57"/><rect x="1611" y="755" width="930" height="42"/></g>
 <path d="M740 56L982 115M1132 121L1576 660" stroke="#11668c" stroke-width="3"/>
 <path d="M1003 120l-22-14-3 18zM1591 679l-8-27-14 12z" fill="#11668c"/>
 <use href="#cur" x="1107" y="147" width="17" height="26"/><use href="#cur" x="1802" y="662" width="17" height="26"/>
 <path d="M1740 695h6" stroke="#333" stroke-width="2"/>
</svg>
</body>
</html>
